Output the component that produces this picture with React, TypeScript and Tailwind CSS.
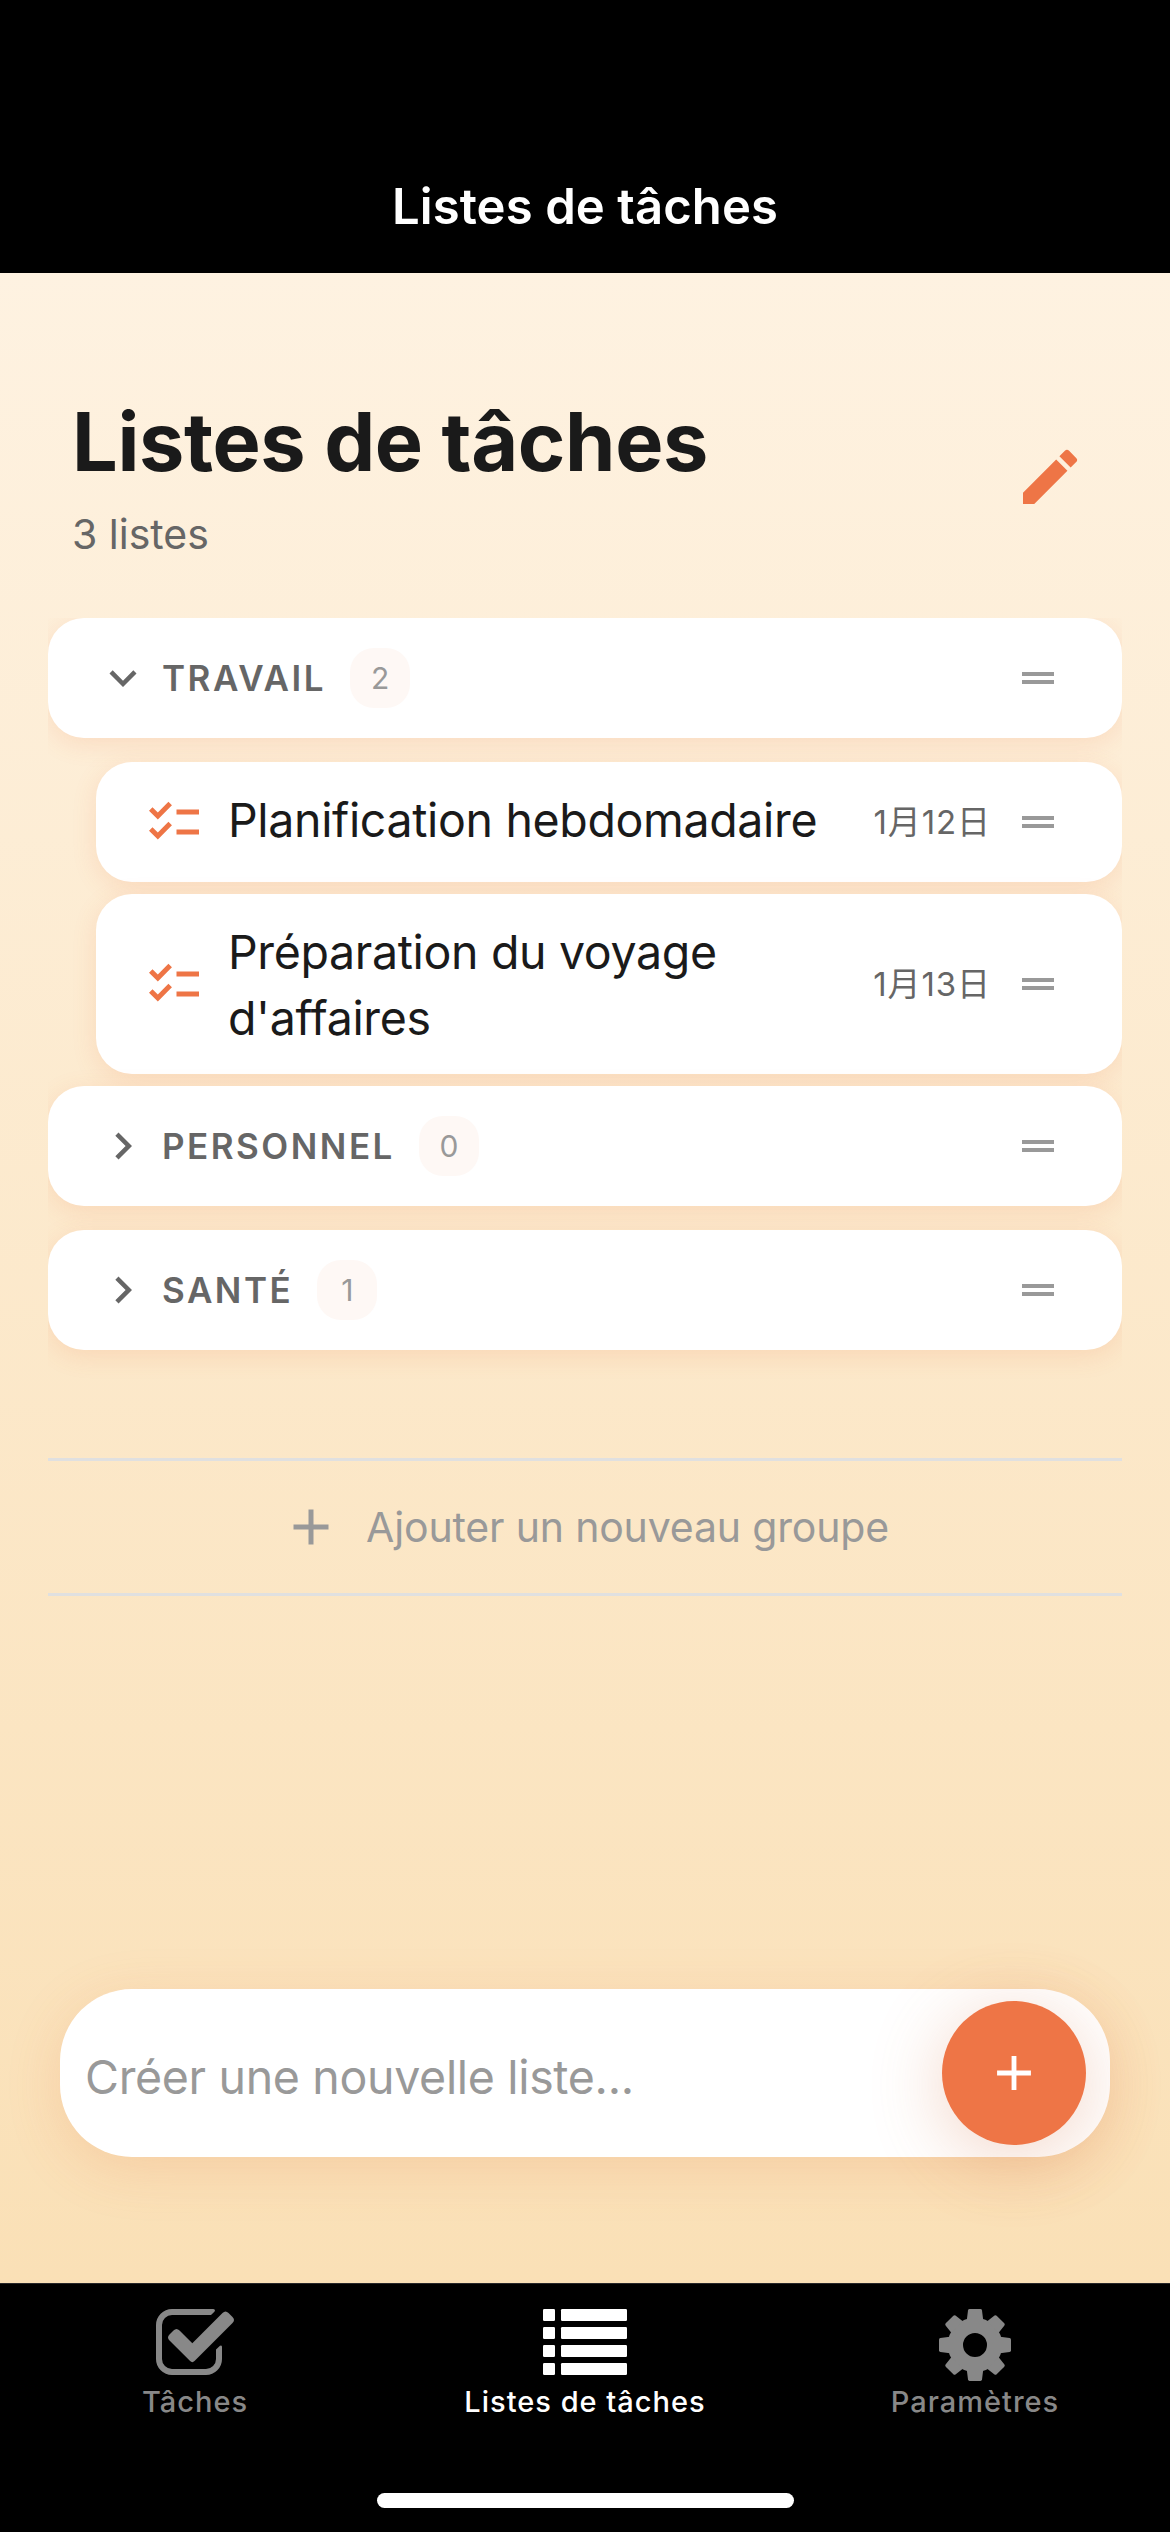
import type { ReactNode } from "react";
import { MdAdd, MdChecklist, MdChevronRight, MdDragHandle, MdEdit, MdExpandMore } from "react-icons/md";

const CARD_SHADOW = "shadow-[0_6px_24px_rgba(238,117,69,0.15)]";

function CheckboxIcon() {
  return (
    <svg width="79" height="66" viewBox="0 0 79 66" fill="currentColor">
      <path
        d="M54 3H16A13 13 0 0 0 3 16V50A13 13 0 0 0 16 63H50A13 13 0 0 0 63 50V41"
        fill="none"
        stroke="currentColor"
        strokeWidth="6"
      />
      <path d="M53.5 0H57Q60 .4 58.4 2.8L55 6H53.5ZM60 41.5V40.6L64 36.8Q66 35.6 66 38V41.5Z" />
      <path d="M36.3 34.3 66.5 4.1Q69.5 1.1 72.5 4.1L76.5 8.1Q79.5 11.1 76.5 14.1L38.5 52.1Q36.3 54.3 34.1 52.1L13.5 31.5Q10.5 28.5 13.5 25.5L17.5 21.5Q20.5 18.5 23.5 21.5Z" />
    </svg>
  );
}

function ListIcon() {
  return (
    <svg width="84" height="66" viewBox="0 0 84 66" fill="currentColor">
      {[0, 18, 36, 54].map((y) => (
        <g key={y}>
          <rect x="0" y={y} width="12" height="12" rx="1.2" />
          <rect x="18" y={y} width="66" height="12" rx="1.2" />
        </g>
      ))}
    </svg>
  );
}

function GearIcon() {
  return (
    <svg width="72" height="72" viewBox="-36 -36 72 72" fill="currentColor">
      <circle r="19.6" fill="none" stroke="currentColor" strokeWidth="15.2" />
      {[0, 45, 90, 135, 180, 225, 270, 315].map((a) => (
        <path
          key={a}
          transform={`rotate(${a})`}
          d="M-8.2 -25 -7 -34.6Q-6.8 -36 -5.4 -36H5.4Q6.8 -36 7 -34.6L8.2 -25Z"
        />
      ))}
    </svg>
  );
}

function GroupRow({ name, count, open }: { name: string; count: number; open?: boolean }) {
  const Chevron = open ? MdExpandMore : MdChevronRight;
  return (
    <div className={`flex h-[120px] items-center rounded-[36px] bg-white pr-[60px] pl-12 ${CARD_SHADOW}`}>
      <Chevron size={54} className="shrink-0 text-[#666666]" />
      <span className="ml-3 text-[35px] leading-[42px] font-semibold tracking-[2.5px] text-[#666666]">{name}</span>
      <span className="ml-6 flex h-[60px] w-[60px] items-center justify-center rounded-3xl bg-[#fef8f5] text-[30px] text-[#999999]">
        {count}
      </span>
      <MdDragHandle size={48} className="ml-auto text-[#999999]" />
    </div>
  );
}

function TaskRow({ title, date, titleClass }: { title: string; date: string; titleClass: string }) {
  return (
    <div
      className={`ml-12 flex min-h-[120px] items-center rounded-[36px] bg-white py-6 pr-[60px] pl-12 ${CARD_SHADOW}`}
    >
      <MdChecklist size={60} className="shrink-0 text-[#ee7546]" />
      <span
        className={`relative mr-6 ml-6 flex-1 text-[46.5px] leading-[66px] tracking-[-0.35px] text-[#1a1a1a] ${titleClass}`}
      >
        {title}
      </span>
      <span className="text-[33px] leading-10 tracking-[0.9px] whitespace-nowrap text-[#666666]">{date}</span>
      <MdDragHandle size={48} className="ml-[23px] shrink-0 text-[#999999]" />
    </div>
  );
}

function Tab({ label, active, children }: { label: string; active?: boolean; children: ReactNode }) {
  return (
    <div className={`flex flex-1 flex-col items-center pt-[25px] ${active ? "text-white" : "text-[#888888]"}`}>
      <div className="h-[72px]">{children}</div>
      <span className="mt-[3px] text-[29px] leading-9 font-medium tracking-[1px]">{label}</span>
    </div>
  );
}

export default function App() {
  return (
    <div className="flex h-[2532px] w-[1170px] flex-col overflow-hidden bg-black font-['Inter','Noto_Sans_CJK_JP',sans-serif]">
      <header className="flex h-[273px] shrink-0 items-end justify-center">
        <h1 className="text-[49px] leading-[132px] font-semibold tracking-[0.1px] text-white">Listes de tâches</h1>
      </header>

      <main className="flex flex-1 flex-col bg-linear-to-b from-[#fef2e1] to-[#fae0b6] px-12">
        <div className="mt-[119px] flex items-center justify-between pr-9 pl-6">
          <div>
            <h2 className="text-[81px] leading-[100px] font-bold tracking-[-0.38px] text-[#1a1a1a]">
              Listes de tâches
            </h2>
            <p className="mt-[17px] text-[41px] leading-[50px] text-[#666666]">3 listes</p>
          </div>
          <MdEdit size={72} className="mt-[3px] text-[#ee7546]" />
        </div>

        <section className="mt-[59px] flex flex-col overflow-clip pb-[108px]">
          <GroupRow name="TRAVAIL" count={2} open />
          <div className="mt-6 mb-3 flex flex-col gap-3">
            <TaskRow title="Planification hebdomadaire" date="1月12日" titleClass="-top-[2px]" />
            <TaskRow title="Préparation du voyage d'affaires" date="1月13日" titleClass="top-px" />
          </div>
          <div className="flex flex-col gap-6">
            <GroupRow name="PERSONNEL" count={0} />
            <GroupRow name="SANTÉ" count={1} />
          </div>
        </section>

        <button className="flex h-[138px] items-center justify-center gap-[25px] border-y-[3px] border-[#e0e0e0] text-[#999999]">
          <MdAdd size={60} />
          <span className="text-[41px] leading-[50px] tracking-[-0.17px]">Ajouter un nouveau groupe</span>
        </button>

        <div className="mx-3 mt-auto mb-[126px] flex h-[168px] items-center justify-between rounded-[72px] bg-white pr-6 pl-[25px] shadow-[0_12px_54px_rgba(230,117,60,0.18)]">
          <span className="pt-2 text-[46.5px] leading-[56px] tracking-[-0.33px] text-[#999999]">
            Créer une nouvelle liste...
          </span>
          <button className="flex h-36 w-36 items-center justify-center rounded-full bg-[#ee7546] text-white shadow-[0_12px_72px_rgba(211,117,70,0.3)]">
            <MdAdd size={58} />
          </button>
        </div>
      </main>

      <nav className="flex h-[249px] shrink-0 flex-col justify-between border-t border-[#272729] bg-black">
        <div className="flex">
          <Tab label="Tâches">
            <CheckboxIcon />
          </Tab>
          <Tab label="Listes de tâches" active>
            <ListIcon />
          </Tab>
          <Tab label="Paramètres">
            <GearIcon />
          </Tab>
        </div>
        <div className="mx-auto mb-6 h-[15px] w-[417px] rounded-full bg-white" />
      </nav>
    </div>
  );
}
